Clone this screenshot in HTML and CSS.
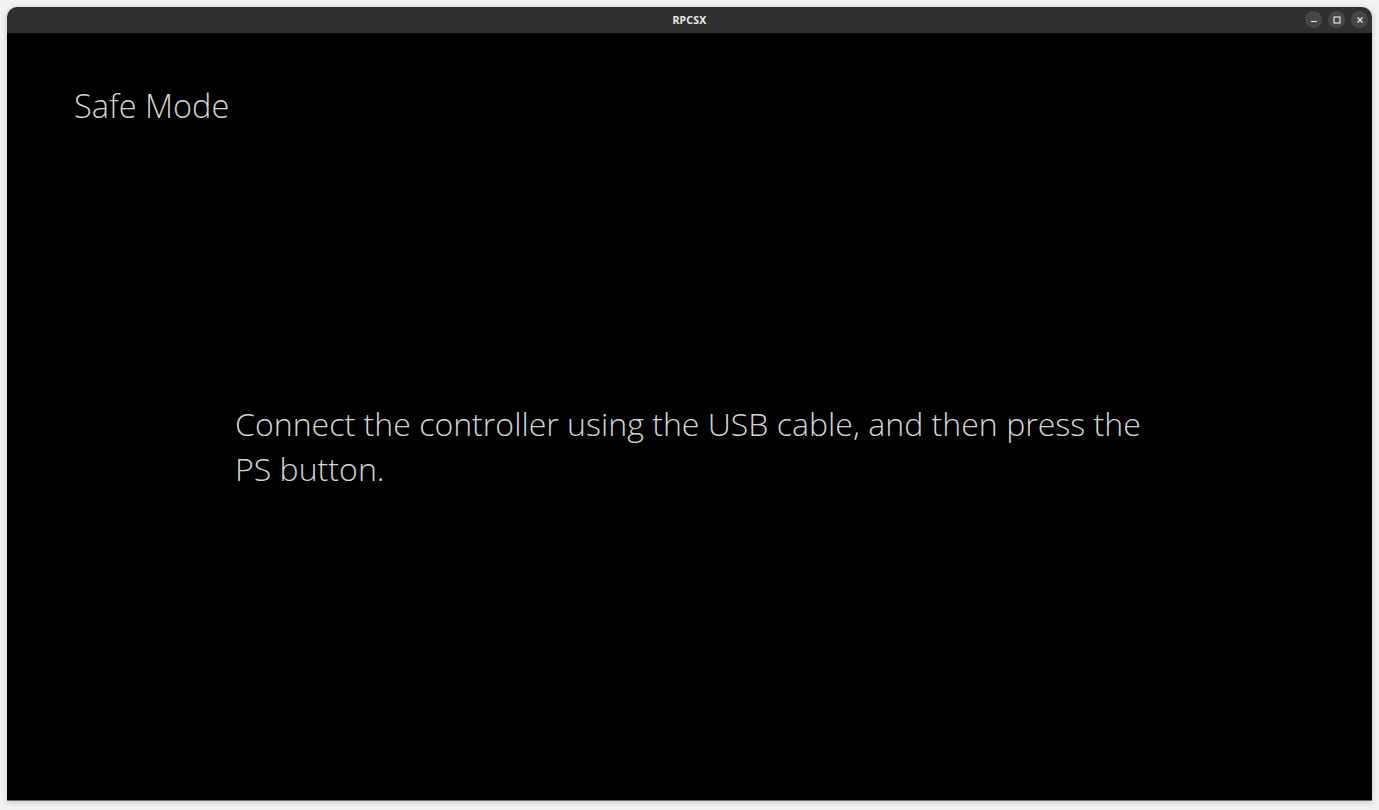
FILE: index.html
```html
<!DOCTYPE html>
<html lang="en">
<head>
    <meta charset="UTF-8">
    <title>RPCSX</title>
    <link rel="stylesheet" href="styles.css">
</head>
<body>
    <div class="window">
        <!-- Title bar -->
        <div class="titlebar">
            <span class="title">RPCSX</span>
            <div class="controls">
                <span class="ctl">
                    <svg width="10" height="10" viewBox="0 0 10 10"><path d="M2 6.5h6" stroke="#eee" stroke-width="1.2"/></svg>
                </span>
                <span class="ctl">
                    <svg width="10" height="10" viewBox="0 0 10 10"><rect x="2" y="2" width="6" height="6" fill="none" stroke="#eee" stroke-width="1.1"/></svg>
                </span>
                <span class="ctl">
                    <svg width="10" height="10" viewBox="0 0 10 10"><path d="M2.5 2.5l5 5M7.5 2.5l-5 5" stroke="#eee" stroke-width="1.2"/></svg>
                </span>
            </div>
        </div>

        <!-- Safe mode screen -->
        <div class="screen">
            <h1 class="heading">Safe Mode</h1>
            <p class="message">Connect the controller using the USB cable, and then press the PS button.</p>
        </div>
    </div>
</body>
</html>
```

FILE: styles.css
```css
* {
    margin: 0;
    padding: 0;
    box-sizing: border-box;
}

body {
    background-color: #f2f2f2;
    height: 100vh;
    padding: 7px 7px 9px 7px;
    font-family: "Open Sans", "Noto Sans", sans-serif;
}

.window {
    height: 100%;
    display: flex;
    flex-direction: column;
    border-radius: 10px 10px 0 0;
    overflow: hidden;
    box-shadow: 0 1px 6px rgba(0, 0, 0, 0.18);
    border-bottom: 1px solid #6a6a6a;
}

.titlebar {
    height: 26px;
    background-color: #303030;
    display: flex;
    align-items: center;
    justify-content: center;
    position: relative;
}

.title {
    color: #e8e8e8;
    font-family: "Noto Sans", sans-serif;
    font-weight: 700;
    font-size: 10.5px;
    letter-spacing: 0.2px;
}

.controls {
    position: absolute;
    right: 4px;
    top: 4px;
    display: flex;
    gap: 6px;
}

.ctl {
    width: 17px;
    height: 17px;
    border-radius: 50%;
    background-color: #474747;
    display: flex;
    align-items: center;
    justify-content: center;
}

.screen {
    flex: 1;
    background-color: #000;
    padding: 53px 67px 0 67px;
    color: #d4d4d4;
}

.heading {
    font-weight: 300;
    font-size: 32.5px;
    line-height: 40px;
}

.message {
    margin-top: 275px;
    margin-left: 161px;
    width: 920px;
    font-weight: 300;
    font-size: 32.1px;
    line-height: 45px;
}
```
